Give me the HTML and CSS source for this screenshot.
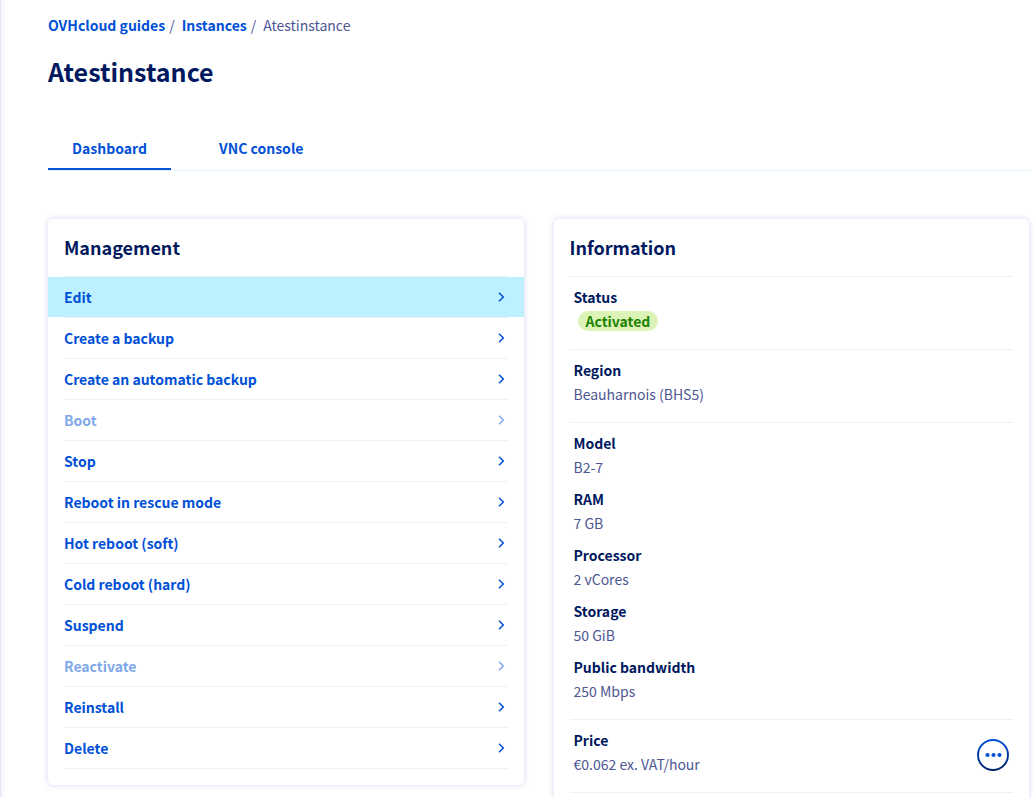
FILE: index.html
```html
<!DOCTYPE html>
<html lang="en">
<head>
<meta charset="utf-8">
<title>Atestinstance</title>
<meta name="viewport" content="width=device-width, initial-scale=1">
<link rel="stylesheet" href="styles.css">
</head>
<body>
<svg class="sprite" aria-hidden="true">
  <symbol id="chevron" viewBox="0 0 8 12"><path d="M2 1.8 6.3 6 2 10.2" fill="none" stroke="currentColor" stroke-width="1.5"/></symbol>
</svg>
<main class="page">
  <nav class="breadcrumb" aria-label="Breadcrumb">
    <a href="#">OVHcloud guides</a><span class="separator">/</span><a href="#">Instances</a><span class="separator">/</span><span aria-current="page">Atestinstance</span>
  </nav>
  <h1 class="page-title">Atestinstance</h1>
  <nav class="tabs" aria-label="Instance">
    <a class="tab tab-active" href="#" aria-current="page">Dashboard</a>
    <a class="tab" href="#">VNC console</a>
  </nav>
  <div class="cards">
    <section class="card">
      <h2 class="card-title">Management</h2>
      <ul class="actions">
        <li><button class="action action-highlight" type="button">Edit<svg class="chevron"><use href="#chevron"/></svg></button></li>
        <li><button class="action" type="button">Create a backup<svg class="chevron"><use href="#chevron"/></svg></button></li>
        <li><button class="action" type="button">Create an automatic backup<svg class="chevron"><use href="#chevron"/></svg></button></li>
        <li><button class="action" type="button" disabled>Boot<svg class="chevron"><use href="#chevron"/></svg></button></li>
        <li><button class="action" type="button">Stop<svg class="chevron"><use href="#chevron"/></svg></button></li>
        <li><button class="action" type="button">Reboot in rescue mode<svg class="chevron"><use href="#chevron"/></svg></button></li>
        <li><button class="action" type="button">Hot reboot (soft)<svg class="chevron"><use href="#chevron"/></svg></button></li>
        <li><button class="action" type="button">Cold reboot (hard)<svg class="chevron"><use href="#chevron"/></svg></button></li>
        <li><button class="action" type="button">Suspend<svg class="chevron"><use href="#chevron"/></svg></button></li>
        <li><button class="action" type="button" disabled>Reactivate<svg class="chevron"><use href="#chevron"/></svg></button></li>
        <li><button class="action" type="button">Reinstall<svg class="chevron"><use href="#chevron"/></svg></button></li>
        <li><button class="action" type="button">Delete<svg class="chevron"><use href="#chevron"/></svg></button></li>
      </ul>
    </section>
    <section class="card">
      <h2 class="card-title">Information</h2>
      <div class="group">
        <dl class="details">
          <div><dt>Status</dt><dd><span class="badge">Activated</span></dd></div>
        </dl>
      </div>
      <div class="group">
        <dl class="details">
          <div><dt>Region</dt><dd>Beauharnois (BHS5)</dd></div>
        </dl>
      </div>
      <div class="group">
        <dl class="details">
          <div><dt>Model</dt><dd>B2-7</dd></div>
          <div><dt>RAM</dt><dd>7 GB</dd></div>
          <div><dt>Processor</dt><dd>2 vCores</dd></div>
          <div><dt>Storage</dt><dd>50 GiB</dd></div>
          <div><dt>Public bandwidth</dt><dd>250 Mbps</dd></div>
        </dl>
      </div>
      <div class="group">
        <dl class="details">
          <div><dt>Price</dt><dd>€0.062 ex. VAT/hour</dd></div>
        </dl>
        <button class="more" type="button" aria-label="More actions">
          <svg width="32" height="32" viewBox="0 0 32 32">
            <defs><linearGradient id="ring" x1="0" y1="0" x2="0" y2="1"><stop offset="0" stop-color="#0050d7"/><stop offset="1" stop-color="#00236e"/></linearGradient></defs>
            <circle cx="16" cy="16" r="15" fill="none" stroke="url(#ring)" stroke-width="2"/>
            <g fill="#0050d7"><circle cx="10.5" cy="16" r="2.1"/><circle cx="16.5" cy="16" r="2.1"/><circle cx="22.5" cy="16" r="2.1"/></g>
          </svg>
        </button>
      </div>
    </section>
  </div>
</main>
</body>
</html>
```
FILE: styles.css
```css
:root {
  --blue: #0050d7;
  --navy: #00185e;
  --text: #4d5693;
  --line: #f0f0f0;
}

* {
  box-sizing: border-box;
}

body {
  margin: 0;
  height: 100vh;
  overflow: hidden;
  background: #fff;
  color: var(--text);
  font: 14px/24px "Noto Sans CJK SC", "Open Sans", sans-serif;
}

a {
  color: var(--blue);
  font-weight: 700;
  text-decoration: none;
}

button {
  border: 0;
  background: none;
  font: inherit;
  cursor: pointer;
}

.sprite {
  display: none;
}

.page {
  min-height: 100vh;
  padding: 13px 2px 0 48px;
  background: linear-gradient(to right, #e6e6f8 1px, #f3f3fd 1px, #fff 6px);
}

.breadcrumb {
  display: flex;
}

.separator {
  padding: 0 7px 0 4px;
}

.page-title {
  margin: 16px 0 40px;
  color: var(--navy);
  font-size: 25px;
  line-height: 36px;
}

.tabs {
  display: flex;
  gap: 24px;
  border-bottom: 1px solid #e0f3fe;
}

.tab {
  padding: 7px 24px 8px;
  border-bottom: 2px solid transparent;
}

.tab-active {
  border-color: var(--blue);
}

.cards {
  display: grid;
  grid-template-columns: 1fr 1fr;
  align-items: start;
  gap: 30px;
  margin-top: 48px;
  padding-right: 2px;
}

.card {
  padding-bottom: 16px;
  border-radius: 5px;
  background: #fff;
  box-shadow: 0 0 6px #d5d5f2;
}

.card-title {
  margin: 0 16px;
  padding: 16px 0 17px;
  border-bottom: 1px solid var(--line);
  color: var(--navy);
  font-size: 18px;
  line-height: 24px;
}

.actions {
  margin: 0;
  padding: 0;
  list-style: none;
}

.action {
  display: flex;
  align-items: center;
  justify-content: space-between;
  width: 100%;
  padding: 8px 19px 8px 16px;
  color: var(--blue);
  font-weight: 700;
  text-align: left;
}

.action:disabled {
  color: #80a8eb;
}

.action-highlight {
  background: #bef1ff;
}

.actions li::after {
  content: "";
  display: block;
  height: 1px;
  margin: 0 16px;
  background: var(--line);
}

.chevron {
  width: 8px;
  height: 12px;
}

.group {
  display: flex;
  align-items: end;
  justify-content: space-between;
  margin: 0 16px;
  padding: 8px 4px 16px;
  border-bottom: 1px solid var(--line);
}

.details {
  display: grid;
  gap: 8px;
  margin: 0;
}

dt {
  color: var(--navy);
  font-weight: 700;
}

dd {
  margin: 0;
}

.badge {
  display: inline-block;
  margin-left: 4px;
  padding: 0 8px;
  border-radius: 10px;
  background: #dcf3b8;
  color: #1f8300;
  font-weight: 700;
  line-height: 20px;
}

.more {
  display: flex;
  padding: 0 0 5px;
}
```
